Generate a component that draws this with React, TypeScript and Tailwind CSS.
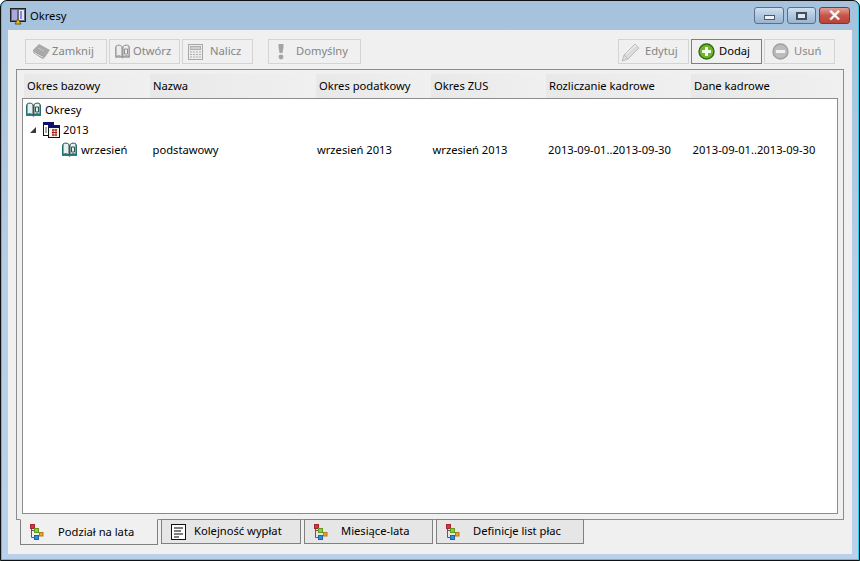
import type { ReactNode } from 'react'

const columns = [
  { label: 'Okres bazowy', width: 'w-[126px]' },
  { label: 'Nazwa', width: 'w-[166px]' },
  { label: 'Okres podatkowy', width: 'w-[115px]' },
  { label: 'Okres ZUS', width: 'w-[115px]' },
  { label: 'Rozliczanie kadrowe', width: 'w-[145px]' },
  { label: 'Dane kadrowe', width: 'w-[145px]' },
]

function BookIcon({ gray = false }: { gray?: boolean }) {
  const cover = gray ? '#b4b4b4' : '#0f8f8f'
  const line = gray ? '#8f8f8f' : '#33504f'
  const page = gray ? '#ececec' : '#e6f0ee'
  return (
    <svg width="17" height="16" viewBox="0 0 17 16" className="shrink-0">
      <path d="M1 3v11h6.500l1 1 1-1H16V3" fill={cover} />
      <path d="M2 2c2-1.300 4-1.300 6 .5V13c-2-1.500-4-1.500-6-.5z" fill={page} stroke={line} />
      <path d="M15 2c-2-1.300-4-1.300-6 .5V13c2-1.500 4-1.500 6-.5z" fill={page} stroke={line} />
      <path d="M10.500 5h3v5h-3z" fill="none" stroke={line} />
    </svg>
  )
}

function ClosedBookIcon() {
  return (
    <svg width="18" height="16" viewBox="0 0 18 16" className="shrink-0">
      <path d="M0 6L6 0l11 6-6 8z" fill="#a9a9a9" />
      <path d="M0 6c0 2 .5 3 2 4l8 5 6-7-5 5z" fill="#8e8e8e" />
      <path d="M1 7.500c.5 1 1 1.500 2 2l7.500 4" fill="none" stroke="#efefef" />
      <path d="M5 4l6 3" stroke="#c4c4c4" />
    </svg>
  )
}

function CalcIcon() {
  return (
    <svg width="17" height="18" viewBox="0 0 17 18" className="shrink-0">
      <rect x="1.500" y="1.500" width="14" height="15" fill="#ececec" stroke="#a8a8a8" />
      <rect x="3.500" y="3.500" width="10" height="3" fill="#d0d0d0" stroke="#b0b0b0" />
      <path d="M3 9h11M3 11.500h11M3 14h11" stroke="#b0b0b0" strokeDasharray="2 1" />
    </svg>
  )
}

function BangIcon() {
  return (
    <svg width="8" height="17" viewBox="0 0 8 17" className="shrink-0">
      <path d="M1.500 1h5v3L5.500 10h-3L1.500 4z" fill="#a4a4a4" />
      <circle cx="4" cy="14" r="2.400" fill="#a4a4a4" />
    </svg>
  )
}

function PencilIcon() {
  return (
    <svg width="20" height="20" viewBox="0 0 20 20" className="shrink-0">
      <path d="M1 19l2-6L14 2l4 4L7 17z" fill="#dcdcdc" stroke="#bdbdbd" />
      <path d="M3 13l4 4" stroke="#bdbdbd" />
      <path d="M5 12L15 3" stroke="#f4f4f4" />
    </svg>
  )
}

function RoundIcon({ plus }: { plus: boolean }) {
  return (
    <svg width="17" height="17" viewBox="0 0 17 17" className="shrink-0">
      <circle cx="8.500" cy="8.500" r="7.500" fill={plus ? '#6db52c' : '#bcbcbc'} stroke={plus ? '#2f6b16' : '#a0a0a0'} strokeWidth="1.400" />
      {plus ? (
        <path d="M7 4h3v3h3v3h-3v3H7v-3H4V7h3z" fill="#f4f8ea" />
      ) : (
        <rect x="4" y="7" width="9" height="3" fill="#f2f2f2" />
      )}
    </svg>
  )
}

function CalendarIcon() {
  return (
    <svg width="17" height="16" viewBox="0 0 17 16" className="shrink-0">
      <rect x="0.500" y="0.500" width="10" height="13" fill="#fff" stroke="#111" />
      <rect x="0" y="0" width="11" height="3" fill="#10106a" />
      <path d="M2 6h2M2 8h2M2 10h2" stroke="#555" />
      <rect x="5.500" y="3.500" width="11" height="12" fill="#f4f0e4" stroke="#111" />
      <rect x="5" y="3" width="12" height="3" fill="#10106a" />
      <path d="M9 8h5M9 10.500h5M9 13h5M10 7v7M13 7v7" stroke="#a01818" />
    </svg>
  )
}

function TreeIcon() {
  return (
    <svg width="14" height="16" viewBox="0 0 14 16" className="shrink-0">
      <path d="M1.500 4v9.500H5M1.500 6.500H5" fill="none" stroke="#5a5a5a" />
      <rect x="0.500" y="0.500" width="4" height="4" fill="#e0303c" stroke="#a82430" />
      <rect x="4.500" y="4.500" width="4" height="4" fill="#8ccb3a" stroke="#5e9a22" />
      <rect x="9.500" y="8.500" width="3.500" height="3.500" fill="#eba22e" stroke="#b5771c" />
      <rect x="4.500" y="11.500" width="4" height="4" fill="#2f8be0" stroke="#1f63a8" />
    </svg>
  )
}

function ListIcon() {
  return (
    <svg width="15" height="16" viewBox="0 0 15 16" className="shrink-0">
      <rect x="0.500" y="0.500" width="14" height="15" fill="#fff" stroke="#111" />
      <path d="M3 4h9M3 7h7M3 10h9M3 13h5" stroke="#555" strokeWidth="1.400" />
    </svg>
  )
}

function WindowIcon() {
  return (
    <svg width="17" height="17" viewBox="0 0 17 17" className="shrink-0">
      <rect x="0.500" y="0.500" width="15" height="13" fill="#6b6b80" stroke="#222" />
      <rect x="2" y="2" width="5" height="10" fill="#a9a9dc" />
      <rect x="9" y="2" width="5" height="10" fill="#e6e6f4" />
      <path d="M11 3v8" stroke="#2a2ad0" />
      <path d="M5 16l3-5 3 5z" fill="#e8c214" stroke="#6a5a08" />
    </svg>
  )
}

function ToolButton({ width, icon, label, spacing, active = false }: { width: string; icon: ReactNode; label: string; spacing: string; active?: boolean }) {
  return (
    <div className={`${width} ${spacing} h-[25px] flex items-center border ${active ? 'border-[#7f7f7f] text-black' : 'border-[#d4d4d4] text-[#858585]'}`}>
      {icon}
      <span>{label}</span>
    </div>
  )
}

function CaptionButton({ tone, children }: { tone: string; children: ReactNode }) {
  return (
    <div className={`h-[17px] flex items-center justify-center rounded-[3px] border border-[#5d6f86] ${tone}`}>
      {children}
    </div>
  )
}

function Row({ indent, icon, name, cells = [] }: { indent: ReactNode; icon: ReactNode; name: string; cells?: string[] }) {
  return (
    <div className="h-5 flex items-center">
      <div className="w-[128px] flex items-center gap-[3px]">
        {indent}
        {icon}
        <span>{name}</span>
      </div>
      {cells.map((c, i) => (
        <div key={i} className={i === 0 ? 'w-[165px]' : i === 1 ? 'w-[116px]' : i === 2 ? 'w-[116px]' : 'w-[145px]'}>
          {c}
        </div>
      ))}
    </div>
  )
}

function Tab({ width, icon, label, gap, active = false }: { width: string; icon: ReactNode; label: string; gap: string; active?: boolean }) {
  return (
    <div className={`${width} -mt-px flex items-center border-x border-b border-[#808080] pl-[9px] ${active ? 'h-[26px] bg-[#f0f0f0] border-t border-t-[#f0f0f0]' : 'h-[25px] bg-[#e6e6e6] border-t'} ${gap}`}>
      {icon}
      <span>{label}</span>
    </div>
  )
}

export default function App() {
  return (
    <div className="w-[860px] h-[561px] overflow-hidden bg-white font-['Noto_Sans','Liberation_Sans',sans-serif] text-[11.2px] text-black">
      <div className="w-full h-full rounded-t-[7px] border border-[#111] bg-[#2fd0ea] pl-px pr-px pb-px">
        <div className="w-full h-full flex flex-col rounded-t-[6px] bg-gradient-to-b from-[#a6c2dc] via-[#b6cee6] to-[#b9d1ea] px-[6px] pb-[5px]">
          {/* title bar */}
          <div className="h-[29px] shrink-0 flex items-center pl-[2px] pt-px">
            <WindowIcon />
            <span className="ml-[3px]">Okresy</span>
            <div className="ml-auto flex gap-[3px] -mt-[1px] mr-[2px]">
              <CaptionButton tone="w-[30px] bg-gradient-to-b from-[#d0e0f0] via-[#b0c8e0] to-[#9ab4d0]">
                <div className="w-[11px] h-[5px] border border-[#4a5a6e] bg-[#eef2f6] mt-[3px]" />
              </CaptionButton>
              <CaptionButton tone="w-[29px] bg-gradient-to-b from-[#d0e0f0] via-[#b0c8e0] to-[#9ab4d0]">
                <div className="w-[11px] h-[8px] border-2 border-[#3f4f63] bg-[#dfe7ef]" />
              </CaptionButton>
              <CaptionButton tone="w-[31px] border-[#7a3a34] bg-gradient-to-b from-[#e0a097] via-[#c9544a] to-[#b8433a]">
                <span className="text-[#f6f6f6] text-[16px] leading-none font-bold font-['Liberation_Sans',sans-serif]">✕</span>
              </CaptionButton>
            </div>
          </div>

          {/* client area */}
          <div className="flex-1 min-h-0 flex flex-col bg-[#f0f0f0] px-[8px]">
            <div className="h-[39px] shrink-0 flex items-start pt-[9px] pl-[9px]">
              <div className="flex gap-[2px]">
                <ToolButton width="w-[82px]" spacing="pl-[7px] gap-[1px]" icon={<ClosedBookIcon />} label="Zamknij" />
                <ToolButton width="w-[71px]" spacing="pl-[4px] gap-[2px]" icon={<BookIcon gray />} label="Otwórz" />
                <ToolButton width="w-[71px]" spacing="pl-[4px] gap-[6px]" icon={<CalcIcon />} label="Nalicz" />
              </div>
              <div className="ml-[15px]">
                <ToolButton width="w-[93px]" spacing="pl-[8px] gap-[11px]" icon={<BangIcon />} label="Domyślny" />
              </div>
              <div className="ml-auto mr-[9px] flex gap-[2px]">
                <ToolButton width="w-[71px]" spacing="pl-[2px] gap-[4px]" icon={<PencilIcon />} label="Edytuj" />
                <ToolButton width="w-[71px]" spacing="pl-[6px] gap-[4px]" icon={<RoundIcon plus />} label="Dodaj" active />
                <ToolButton width="w-[71px]" spacing="pl-[7px] gap-[5px]" icon={<RoundIcon plus={false} />} label="Usuń" />
              </div>
            </div>

            {/* list panel */}
            <div className="h-[451px] shrink-0 border border-[#8c8c8c] px-[5px] pt-[4px] pb-[5px] flex flex-col">
              <div className="h-[24px] shrink-0 flex ml-[2px]">
                {columns.map(col => (
                  <div key={col.label} className={`${col.width} pl-[3px] flex items-center bg-gradient-to-r from-[#e8e8e8] to-[#f0f0f0]`}>
                    {col.label}
                  </div>
                ))}
              </div>
              <div className="flex-1 min-h-0 bg-white border border-[#8c8c8c] pt-[1px] pl-[2px]">
                <Row indent={null} icon={<BookIcon />} name="Okresy" />
                <Row
                  indent={<div className="ml-[5px] mr-[4px] w-0 h-0 border-l-[6px] border-l-transparent border-b-[6px] border-b-[#3a3a3a]" />}
                  icon={<CalendarIcon />}
                  name="2013"
                />
                <Row
                  indent={<div className="w-[33px]" />}
                  icon={<BookIcon />}
                  name="wrzesień"
                  cells={['podstawowy', 'wrzesień 2013', 'wrzesień 2013', '2013-09-01..2013-09-30', '2013-09-01..2013-09-30']}
                />
              </div>
            </div>

            {/* tabs */}
            <div className="flex gap-[3px] pl-[4px]">
              <Tab width="w-[138px]" gap="gap-[14px]" icon={<TreeIcon />} label="Podział na lata" active />
              <Tab width="w-[140px]" gap="gap-[8px]" icon={<ListIcon />} label="Kolejność wypłat" />
              <Tab width="w-[129px]" gap="gap-[13px]" icon={<TreeIcon />} label="Miesiące-lata" />
              <Tab width="w-[148px]" gap="gap-[13px]" icon={<TreeIcon />} label="Definicje list płac" />
            </div>
          </div>
        </div>
      </div>
    </div>
  )
}
